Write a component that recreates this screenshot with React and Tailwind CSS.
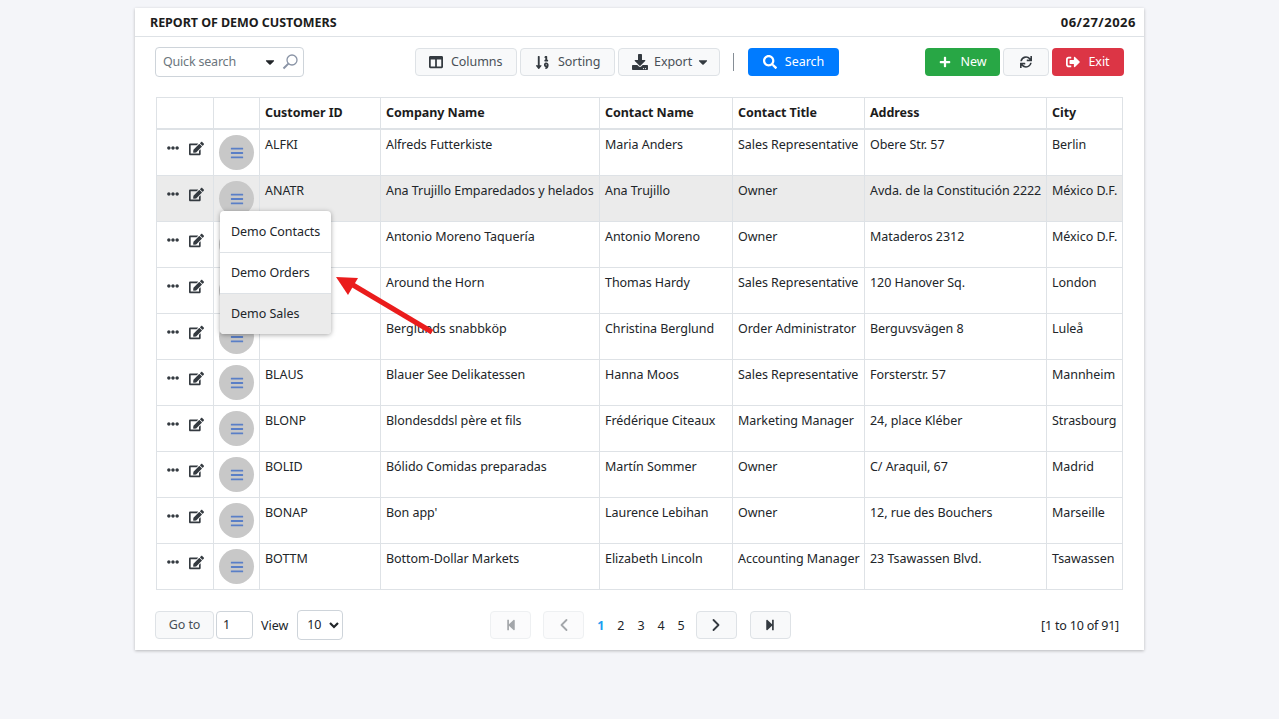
import { ChevronLeft, ChevronRight } from 'lucide-react';
import {
  FaBars, FaCaretDown, FaColumns, FaDownload, FaEdit, FaEllipsisH, FaPlus,
  FaSearch, FaSignOutAlt, FaSortNumericDown, FaStepBackward, FaStepForward, FaSync,
} from 'react-icons/fa';

const rows = [
  ['ALFKI', 'Alfreds Futterkiste', 'Maria Anders', 'Sales Representative', 'Obere Str. 57', 'Berlin'],
  ['ANATR', 'Ana Trujillo Emparedados y helados', 'Ana Trujillo', 'Owner', 'Avda. de la Constitución 2222', 'México D.F.'],
  ['ANTON', 'Antonio Moreno Taquería', 'Antonio Moreno', 'Owner', 'Mataderos 2312', 'México D.F.'],
  ['AROUT', 'Around the Horn', 'Thomas Hardy', 'Sales Representative', '120 Hanover Sq.', 'London'],
  ['BERGS', 'Berglunds snabbköp', 'Christina Berglund', 'Order Administrator', 'Berguvsvägen 8', 'Luleå'],
  ['BLAUS', 'Blauer See Delikatessen', 'Hanna Moos', 'Sales Representative', 'Forsterstr. 57', 'Mannheim'],
  ['BLONP', 'Blondesddsl père et fils', 'Frédérique Citeaux', 'Marketing Manager', '24, place Kléber', 'Strasbourg'],
  ['BOLID', 'Bólido Comidas preparadas', 'Martín Sommer', 'Owner', 'C/ Araquil, 67', 'Madrid'],
  ['BONAP', "Bon app'", 'Laurence Lebihan', 'Owner', '12, rue des Bouchers', 'Marseille'],
  ['BOTTM', 'Bottom-Dollar Markets', 'Elizabeth Lincoln', 'Accounting Manager', '23 Tsawassen Blvd.', 'Tsawassen'],
];

const headers = ['Customer ID', 'Company Name', 'Contact Name', 'Contact Title', 'Address', 'City'];

function ToolButton({ icon, label, className = '' }) {
  return (
    <button className={`h-7 flex items-center rounded border border-[#dee2e6] bg-[#f8f9fa] text-[#495057] ${className}`}>
      {icon}
      {label && <span>{label}</span>}
    </button>
  );
}

export default function App() {
  return (
    <div className="min-h-[719px] bg-[#f4f5f9] pt-2 font-['Noto_Sans','Liberation_Sans',sans-serif] text-[12.5px] tracking-[-0.05px] text-[#212529]">
      <div className="relative ml-[135px] h-[642px] w-[1009px] bg-white shadow-[0_1px_3px_rgba(0,0,0,0.25)]">
        {/* Title */}
        <div className="flex h-[29px] items-center justify-between border-b border-[#dee2e6] pl-[15px] pr-[8px] pt-[2px] font-bold text-[#1c1c1c]">
          <span>REPORT OF DEMO CUSTOMERS</span>
          <span className="text-[13px] tracking-[0.5px]">06/27/2026</span>
        </div>

        {/* Toolbar */}
        <div className="flex h-[60px] items-start px-[20px] pt-[10px]">
          <div className="flex h-[30px] w-[149px] items-center rounded border border-[#ced4da] pl-[7px] pr-[5px] tracking-[-0.2px] text-[#6c757d]">
            <span className="flex-1">Quick search</span>
            <FaCaretDown className="mr-[5px] h-3.5 w-3.5 text-[#212529]" />
            <svg viewBox="0 0 16 16" className="h-4 w-4 text-[#8a94a6]" fill="none" stroke="currentColor">
              <circle cx="10" cy="6" r="5" strokeWidth="1.3" />
              <path d="M6.4 9.6L1.5 14.5" strokeWidth="2" />
            </svg>
          </div>
          <div className="ml-[111px] flex gap-[3px] pt-px">
            <ToolButton className="w-[102px] gap-2 pl-[13px]" label="Columns" icon={<FaColumns className="h-3.5 w-3.5 text-[#343a40]" />} />
            <ToolButton className="w-[95px] gap-2 pl-[14px]" label="Sorting" icon={<FaSortNumericDown className="h-[15px] w-[15px] text-[#343a40]" />} />
            <ToolButton className="w-[102px] gap-[6px] pl-[13px]" label={<span className="flex items-center gap-[4px]">Export <FaCaretDown className="h-3.5 w-3.5 text-[#343a40]" /></span>} icon={<FaDownload className="h-4 w-4 text-[#343a40]" />} />
          </div>
          <div className="ml-[13px] mr-[14px] mt-[6px] h-[18px] w-px bg-[#868e96]" />
          <button className="mt-px flex h-7 w-[91px] items-center justify-center gap-2 rounded bg-[#007bff] text-white">
            <FaSearch className="h-3.5 w-3.5" />
            Search
          </button>
          <div className="ml-auto mt-px flex gap-[3px]">
            <button className="flex h-7 w-[75px] items-center justify-center gap-2.5 rounded bg-[#28a745] text-white">
              <FaPlus className="h-3 w-3" />
              New
            </button>
            <ToolButton className="w-[46px] justify-center" icon={<FaSync className="h-3 w-3 text-[#343a40]" />} />
            <button className="flex h-7 w-[72px] items-center justify-center gap-2 rounded bg-[#dc3545] text-white">
              <FaSignOutAlt className="h-3.5 w-3.5" />
              Exit
            </button>
          </div>
        </div>

        {/* Table */}
        <div className="px-[21px]">
          <table className="w-[966px] table-fixed border-collapse">
            <colgroup>
              <col className="w-[57px]" />
              <col className="w-[46px]" />
              <col className="w-[121px]" />
              <col className="w-[219px]" />
              <col className="w-[133px]" />
              <col className="w-[132px]" />
              <col className="w-[182px]" />
              <col className="w-[76px]" />
            </colgroup>
            <thead>
              <tr className="h-[31px] border-b-2 border-[#dee2e6]">
                <th className="border border-[#dee2e6]" />
                <th className="border border-[#dee2e6]" />
                {headers.map((h) => (
                  <th key={h} className="border border-[#dee2e6] px-[5px] pt-[2px] text-left font-bold text-[#1c1c1c]">{h}</th>
                ))}
              </tr>
            </thead>
            <tbody>
              {rows.map((row, i) => (
                <tr key={row[0]} className={i === 1 ? 'bg-[#ebebeb]' : ''}>
                  <td className="border border-[#dee2e6] align-top">
                    <div className="flex items-center gap-[10px] pl-[10px] pt-[11px]">
                      <FaEllipsisH className="h-3 w-3 text-[#343a40]" />
                      <FaEdit className="h-[15px] w-[15px] text-[#343a40]" />
                    </div>
                  </td>
                  <td className="border border-[#dee2e6] align-top">
                    <div className="ml-[5px] mt-[5px] flex h-[35px] w-[35px] items-center justify-center rounded-full bg-[#c8c8c8] pt-px">
                      <FaBars className="h-3.5 w-3.5 text-[#5a7fc7]" />
                    </div>
                  </td>
                  {row.map((cell, c) => (
                    <td key={c} className="h-[46px] whitespace-nowrap border border-[#dee2e6] px-[5px] pb-[21px] pt-[6px] align-top leading-[18px]">
                      {cell}
                    </td>
                  ))}
                </tr>
              ))}
            </tbody>
          </table>
        </div>

        {/* Pager */}
        <div className="flex items-start pl-[20px] pr-[25px] pt-[21px]">
          <ToolButton className="w-[59px] justify-center pt-px" label="Go to" />
          <div className="ml-[2px] flex h-7 w-[37px] items-center rounded border border-[#ced4da] pl-[6px] pt-px">1</div>
          <span className="ml-[8px] mt-[6px]">View</span>
          <div className="ml-[9px] -mt-px flex h-[30px] w-[46px] items-center justify-between rounded border border-[#ced4da] pl-[9px] pr-[2px] pt-px">
            10
            <svg viewBox="0 0 12 12" className="h-3 w-3 text-[#212529]" fill="none" stroke="currentColor" strokeWidth="2.2">
              <path d="M2 4l4 4 4-4" />
            </svg>
          </div>
          <ToolButton className="ml-[147px] w-[41px] justify-center opacity-50" icon={<FaStepBackward className="h-3 w-3 text-[#495057]" />} />
          <ToolButton className="ml-[12px] w-[41px] justify-center opacity-50" icon={<ChevronLeft className="h-5 w-5 text-[#495057]" strokeWidth={2.2} />} />
          <div className="ml-[13px] mt-[6px] flex gap-[13px]">
            <span className="font-bold text-[#1e9df1]">1</span>
            <span>2</span>
            <span>3</span>
            <span>4</span>
            <span>5</span>
          </div>
          <ToolButton className="ml-[11px] w-[41px] justify-center" icon={<ChevronRight className="h-5 w-5 text-[#343a40]" strokeWidth={2.2} />} />
          <ToolButton className="ml-[13px] w-[41px] justify-center" icon={<FaStepForward className="h-3 w-3 text-[#343a40]" />} />
          <span className="ml-auto mt-[6px] tracking-[-0.2px]">[1 to 10 of 91]</span>
        </div>

        {/* Row action menu */}
        <div className="absolute left-[85px] top-[203px] w-[111px] rounded-sm bg-white shadow-[0_1px_5px_rgba(0,0,0,0.35)]">
          <div className="flex h-[42px] items-center border-b border-[#dee2e6] pl-[11px] pt-px">Demo Contacts</div>
          <div className="flex h-[41px] items-center border-b border-[#dee2e6] pl-[11px]">Demo Orders</div>
          <div className="flex h-[40px] items-center rounded-b-sm bg-[#ebebeb] pl-[11px]">Demo Sales</div>
        </div>

        {/* Annotation arrow */}
        <svg className="absolute left-[195px] top-[260px] h-[80px] w-[110px]" viewBox="0 0 110 80" fill="#ea1c1c">
          <path d="M102 64L23 17" stroke="#ea1c1c" strokeWidth="5" />
          <path d="M6 9L28 10L18 27Z" />
        </svg>
      </div>
    </div>
  );
}
